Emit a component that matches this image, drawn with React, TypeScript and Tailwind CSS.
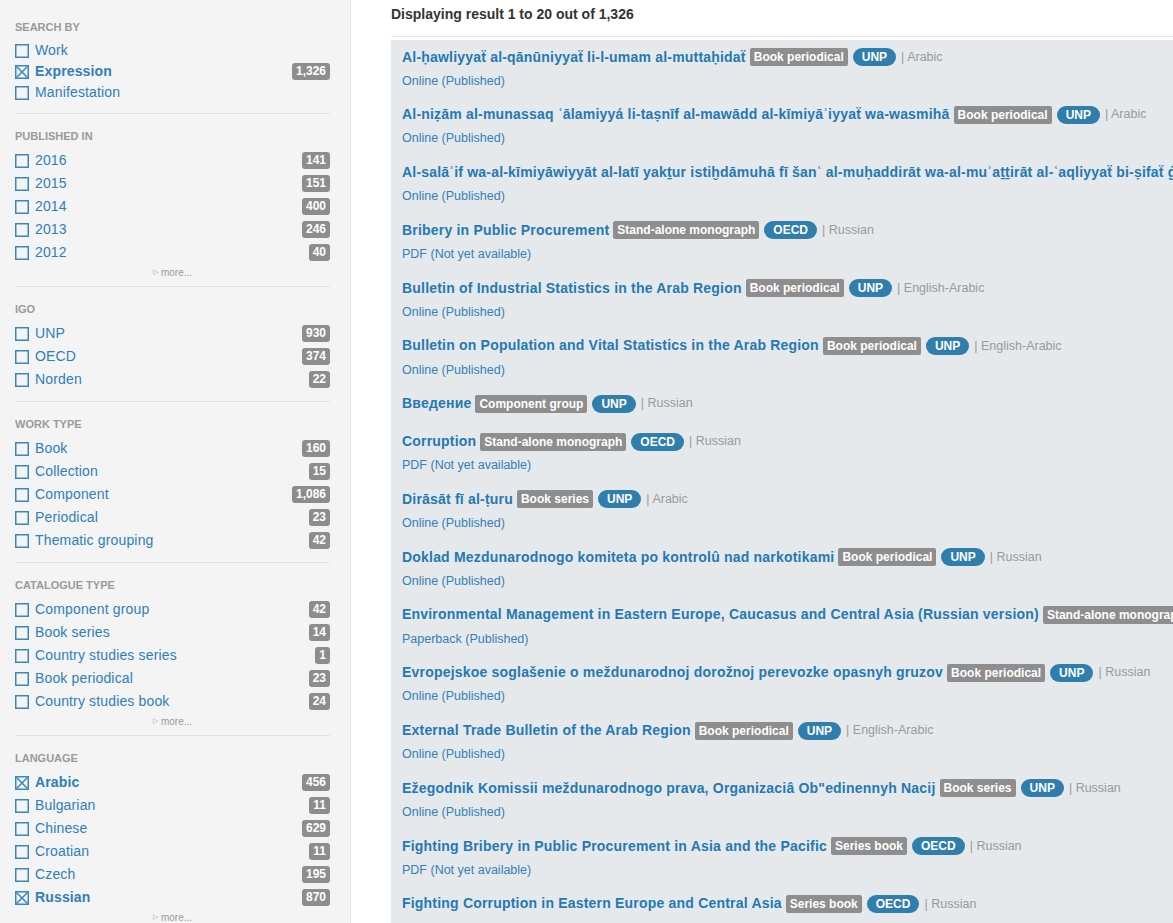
import React from "react";

type Facet = { label: string; count?: string; checked?: boolean };
type Section = { title: string; items: Facet[]; more?: boolean; compact?: boolean };

const sections: Section[] = [
  {
    title: "Search by",
    compact: true,
    items: [
      { label: "Work" },
      { label: "Expression", count: "1,326", checked: true },
      { label: "Manifestation" },
    ],
  },
  {
    title: "Published in",
    more: true,
    items: [
      { label: "2016", count: "141" },
      { label: "2015", count: "151" },
      { label: "2014", count: "400" },
      { label: "2013", count: "246" },
      { label: "2012", count: "40" },
    ],
  },
  {
    title: "IGO",
    items: [
      { label: "UNP", count: "930" },
      { label: "OECD", count: "374" },
      { label: "Norden", count: "22" },
    ],
  },
  {
    title: "Work type",
    items: [
      { label: "Book", count: "160" },
      { label: "Collection", count: "15" },
      { label: "Component", count: "1,086" },
      { label: "Periodical", count: "23" },
      { label: "Thematic grouping", count: "42" },
    ],
  },
  {
    title: "Catalogue type",
    more: true,
    items: [
      { label: "Component group", count: "42" },
      { label: "Book series", count: "14" },
      { label: "Country studies series", count: "1" },
      { label: "Book periodical", count: "23" },
      { label: "Country studies book", count: "24" },
    ],
  },
  {
    title: "Language",
    more: true,
    items: [
      { label: "Arabic", count: "456", checked: true },
      { label: "Bulgarian", count: "11" },
      { label: "Chinese", count: "629" },
      { label: "Croatian", count: "11" },
      { label: "Czech", count: "195" },
      { label: "Russian", count: "870", checked: true },
    ],
  },
];

type Result = { title: string; type: string; igo: string; lang: string; status?: string };

const results: Result[] = [
  { title: "Al-ḥawliyyaẗ al-qānūniyyaẗ li-l-umam al-muttaḥidaẗ", type: "Book periodical", igo: "UNP", lang: "Arabic", status: "Online (Published)" },
  { title: "Al-niẓām al-munassaq ʿālamiyyá li-taṣnīf al-mawādd al-kīmiyāʾiyyaẗ wa-wasmihā", type: "Book periodical", igo: "UNP", lang: "Arabic", status: "Online (Published)" },
  { title: "Al-salāʾif wa-al-kīmiyāwiyyāt al-latī yakṯur istiḫdāmuhā fī šanʿ al-muḥaddirāt wa-al-muʾaṯṯirāt al-ʿaqliyyaẗ bi-ṣifaẗ ġayr mašrūʿaẗ", type: "Book periodical", igo: "UNP", lang: "Arabic", status: "Online (Published)" },
  { title: "Bribery in Public Procurement", type: "Stand-alone monograph", igo: "OECD", lang: "Russian", status: "PDF (Not yet available)" },
  { title: "Bulletin of Industrial Statistics in the Arab Region", type: "Book periodical", igo: "UNP", lang: "English-Arabic", status: "Online (Published)" },
  { title: "Bulletin on Population and Vital Statistics in the Arab Region", type: "Book periodical", igo: "UNP", lang: "English-Arabic", status: "Online (Published)" },
  { title: "Введение", type: "Component group", igo: "UNP", lang: "Russian" },
  { title: "Corruption", type: "Stand-alone monograph", igo: "OECD", lang: "Russian", status: "PDF (Not yet available)" },
  { title: "Dirāsāt fī al-ṭuru", type: "Book series", igo: "UNP", lang: "Arabic", status: "Online (Published)" },
  { title: "Doklad Mezdunarodnogo komiteta po kontrolû nad narkotikami", type: "Book periodical", igo: "UNP", lang: "Russian", status: "Online (Published)" },
  { title: "Environmental Management in Eastern Europe, Caucasus and Central Asia (Russian version)", type: "Stand-alone monograph", igo: "OECD", lang: "Russian", status: "Paperback (Published)" },
  { title: "Evropejskoe soglašenie o meždunarodnoj dorožnoj perevozke opasnyh gruzov", type: "Book periodical", igo: "UNP", lang: "Russian", status: "Online (Published)" },
  { title: "External Trade Bulletin of the Arab Region", type: "Book periodical", igo: "UNP", lang: "English-Arabic", status: "Online (Published)" },
  { title: "Ežegodnik Komissii meždunarodnogo prava, Organizaciâ Ob\"edinennyh Nacij", type: "Book series", igo: "UNP", lang: "Russian", status: "Online (Published)" },
  { title: "Fighting Bribery in Public Procurement in Asia and the Pacific", type: "Series book", igo: "OECD", lang: "Russian", status: "PDF (Not yet available)" },
  { title: "Fighting Corruption in Eastern Europe and Central Asia", type: "Series book", igo: "OECD", lang: "Russian", status: "PDF (Not yet available)" },
];

function CheckBox({ checked }: { checked?: boolean }) {
  return (
    <svg width="14" height="14" viewBox="0 0 14 14" className="shrink-0">
      <rect x="0.75" y="0.75" width="12.5" height="12.5" fill="none" stroke="#3a87c2" strokeWidth="1.5" />
      {checked ? (
        <path d="M1.5 1.5 L12.5 12.5 M12.5 1.5 L1.5 12.5" stroke="#3a87c2" strokeWidth="1.5" />
      ) : null}
    </svg>
  );
}

function FacetSection({ section, first }: { section: Section; first: boolean }) {
  return (
    <div
      className={`border-b border-[#e2e2e2] ${first ? "pt-[19px]" : "pt-[14px]"} ${
        section.more ? "pb-[6px]" : "pb-[10px]"
      }`}
    >
      <div className="h-4 mb-[5px] text-[11px] leading-4 font-bold uppercase text-[#9a9a9a]">
        {section.title}
      </div>
      {section.items.map((item) => (
        <div
          key={item.label}
          className={`flex items-center ${section.compact ? "h-[21px]" : "h-[23px]"}`}
        >
          <CheckBox checked={item.checked} />
          <span
            className={`ml-[6px] text-[14px] tracking-[0.15px] text-[#2f7fba] ${
              item.checked ? "font-bold" : ""
            }`}
          >
            {item.label}
          </span>
          {item.count ? (
            <span className="ml-auto h-[17px] px-[4px] rounded-[3px] bg-[#8d8d8d] text-white text-[12px] font-bold leading-[17px]">
              {item.count}
            </span>
          ) : null}
        </div>
      ))}
      {section.more ? (
        <div className="h-[16px] flex items-center justify-center text-[10px] text-[#9a9a9a]">
          <span className="text-[7px] mr-[3px]">▷</span>more...
        </div>
      ) : null}
    </div>
  );
}

function ResultRow({ result }: { result: Result }) {
  return (
    <div className="pb-[9.8px]">
      <div className="h-[28px] flex items-center whitespace-nowrap">
        <span className="text-[14px] font-bold tracking-[0.2px] text-[#2479b3]">{result.title}</span>
        <span className="ml-[4px] h-[18px] px-[4px] rounded-[2px] bg-[#8e8e8e] text-white text-[12px] font-bold leading-[18px]">
          {result.type}
        </span>
        <span className="ml-[5px] h-[18px] px-[9px] rounded-full bg-[#2f7eac] text-white text-[12px] font-bold leading-[18px]">
          {result.igo}
        </span>
        <span className="ml-[5px] text-[12.5px] text-[#9a9a9a]">| {result.lang}</span>
      </div>
      {result.status ? (
        <div className="h-[20px] flex items-center text-[12.5px] text-[#3480b8]">{result.status}</div>
      ) : null}
    </div>
  );
}

export default function App() {
  return (
    <div
      className="flex w-[1173px] h-[923px] overflow-hidden bg-white"
      style={{ fontFamily: '"Liberation Sans", Arial, sans-serif' }}
    >
      <aside className="w-[351px] shrink-0 bg-[#f4f4f4] border-r border-[#e6e6e6] pl-[15px] pr-[20px]">
        {sections.map((section, i) => (
          <FacetSection key={section.title} section={section} first={i === 0} />
        ))}
      </aside>
      <main className="flex-1 min-w-0 pl-[40px]">
        <div className="h-[37px] border-b border-[#e6e6e6] flex items-start pt-[5px]">
          <h2 className="text-[14px] font-bold text-[#333] leading-[18px]">
            Displaying result 1 to 20 out of 1,326
          </h2>
        </div>
        <div className="mt-[3px] bg-[#e5e9ec] pl-[11px] pt-[3px] overflow-hidden">
          {results.map((result) => (
            <ResultRow key={result.title} result={result} />
          ))}
        </div>
      </main>
    </div>
  );
}
